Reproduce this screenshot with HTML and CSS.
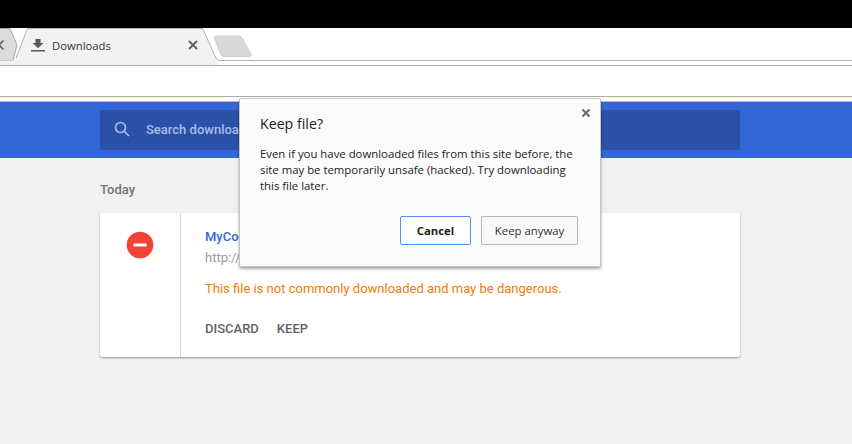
FILE: index.html
```html
<!DOCTYPE html>
<html lang="en">
<head>
<meta charset="utf-8">
<title>Downloads</title>
<link rel="stylesheet" href="styles.css">
</head>
<body>
<div class="topbar"></div>
<div class="tabstrip">
  <svg class="tabshapes" width="852" height="38" viewBox="0 0 852 38">
    <path d="M-1 .5H10L17 17 13 32.500H-1Z" fill="#dcdcdc" stroke="#a8a8a8"/>
    <path d="M-1 17 3.500 12.500M-1 17 3.500 21.500" fill="none" stroke="#666" stroke-width="1.600"/>
    <path d="M0 32.500H14L27.500 .5H202.500L216 30Q217 37 220 37.500H0Z" fill="#f2f2f2"/>
    <path d="M16 30 27.500 .5H202.500L216 30Q217 32.500 220 32.500H852" fill="none" stroke="#b4b4b4"/>
    <path d="M0 37.500H852" stroke="#aeaeae" fill="none"/>
    <path d="M214 9.500Q214.500 8 216 8H239Q241 8 242 10L251 26Q252 28.500 249 28.500H224Q222 28.500 221 27Z" fill="#d9d9d9" stroke="#cfcfcf"/>
  </svg>
  <div class="tab">
    <svg class="tab-icon" width="16" height="16" viewBox="0 0 16 16"><path d="M5.500 2H10.500V6H13.500L8 11.300 2.500 6H5.500Z M1 13H15V14.500H1Z" fill="#5a5a5a"/></svg>
    <span class="tab-title">Downloads</span>
    <svg class="tab-close" width="10" height="10" viewBox="0 0 10 10"><path d="M1 1 9 9M9 1 1 9" stroke="#5f5f5f" stroke-width="1.800"/></svg>
  </div>
</div>
<div class="toolbar"></div>
<div class="gap"></div>
<main class="page">
  <header class="blue">
    <div class="search">
      <svg width="18" height="18" viewBox="0 0 18 18"><circle cx="7.500" cy="7.500" r="5" fill="none" stroke="#a9bde6" stroke-width="1.700"/><path d="M11.200 11.200 16 16" stroke="#a9bde6" stroke-width="1.700"/></svg>
      <span class="search-text">Search downloads</span>
    </div>
  </header>
  <section class="list">
    <h2 class="day">Today</h2>
    <article class="card">
      <div class="card-icon">
        <svg width="28" height="28" viewBox="0 0 28 28"><circle cx="14" cy="14" r="13.300" fill="#f44336"/><rect x="7.500" y="12.500" width="13" height="3" fill="#fff"/></svg>
      </div>
      <div class="card-body">
        <a class="file">MyCoolFile.exe</a>
        <div class="url">http://example.com/</div>
        <p class="warn">This file is not commonly downloaded and may be dangerous.</p>
        <div class="actions"><span>DISCARD</span><span>KEEP</span></div>
      </div>
    </article>
  </section>
</main>
<div class="dialog">
  <svg class="dialog-close" width="10" height="10" viewBox="0 0 10 10"><path d="M1.500 1.500 8.500 8.500M8.500 1.500 1.500 8.500" stroke="#6a6a6a" stroke-width="2"/></svg>
  <h1 class="dialog-title">Keep file?</h1>
  <p class="dialog-text">Even if you have downloaded files from this site before, the site may be temporarily unsafe (hacked). Try downloading this file later.</p>
  <div class="dialog-buttons">
    <button class="btn btn-focus">Cancel</button>
    <button class="btn">Keep anyway</button>
  </div>
</div>
</body>
</html>
```

FILE: styles.css
```css
* { box-sizing: border-box; }
html, body { margin: 0; height: 444px; overflow: hidden; background: #f1f1f1; }
body { font-family: Roboto, sans-serif; }
.topbar { height: 28px; background: #000; }
.tabstrip { position: relative; height: 38px; background: #fff; overflow: hidden; }
.tabshapes { position: absolute; left: 0; top: 0; }
.tab { position: relative; display: flex; align-items: center; width: 168px; height: 34px; margin-left: 30px; }
.tab-icon { flex: none; }
.tab-title { flex: 1; margin-left: 6px; font: 11.300px "Open Sans", sans-serif; color: #333; }
.tab-close { flex: none; }
.toolbar { height: 30px; background: #fff; }
.gap { height: 6px; background: #fff; border-top: 1px solid #aaa; border-bottom: 1px solid #bdbdbd; }
.blue { height: 56px; background: #3367d6; padding: 8px 112px 0 100px; }
.search { display: flex; align-items: center; height: 40px; width: 640px; padding: 0 0 2px 13px; background: #2a50a7; border-radius: 2px; }
.search-text { margin-left: 15px; font-size: 13px; font-weight: 500; color: #a9bde6; }
.list { padding: 0 112px 0 100px; }
.day { margin: 0; padding-top: 24px; height: 55px; font-size: 13px; font-weight: 500; line-height: 16px; color: #757575; }
.card { display: flex; width: 640px; height: 144px; background: #fff; border-radius: 2px; box-shadow: 0 1px 2px rgba(0,0,0,.4); }
.card-icon { flex: none; width: 81px; padding: 18px 0 0 26px; border-right: 1px solid #d5d5d5; }
.card-icon svg { display: block; }
.card-body { flex: 1; padding: 16px 0 0 24px; font-size: 13px; }
.file { display: block; height: 16px; line-height: 16px; font-weight: 500; color: #3367d6; }
.url { margin-top: 5px; height: 16px; line-height: 16px; color: #999; }
.warn { margin: 15px 0 0; line-height: 16px; color: #f57c00; font-size: 13px; }
.actions { display: flex; gap: 18px; margin-top: 24px; line-height: 16px; font-size: 13px; font-weight: 500; color: #5f6368; }
.dialog { position: absolute; left: 239px; top: 98px; width: 362px; height: 169px; padding: 15px 20px 0; background: #fbfbfb; border: 1px solid #c4c4c4; border-radius: 2px; box-shadow: 0 2px 3px rgba(0,0,0,.35); font-family: "Open Sans", sans-serif; }
.dialog-close { position: absolute; right: 9px; top: 9px; }
.dialog-title { margin: 0; font-size: 14.200px; font-weight: 400; line-height: 20px; color: #222; }
.dialog-text { margin: 12px 0 0; font-size: 11.360px; line-height: 16px; color: #222; }
.dialog-buttons { display: flex; justify-content: flex-end; gap: 10px; margin: 22px 2px 0 0; }
.btn { height: 29px; width: 97px; padding: 0; background: #f8f8f8; border: 1px solid #b5b5b5; border-radius: 2px; font: 11.360px "Open Sans", sans-serif; color: #333; }
.btn-focus { width: 71px; background: #fff; border-color: #4d90fe; font-weight: 700; color: #222; }
```
